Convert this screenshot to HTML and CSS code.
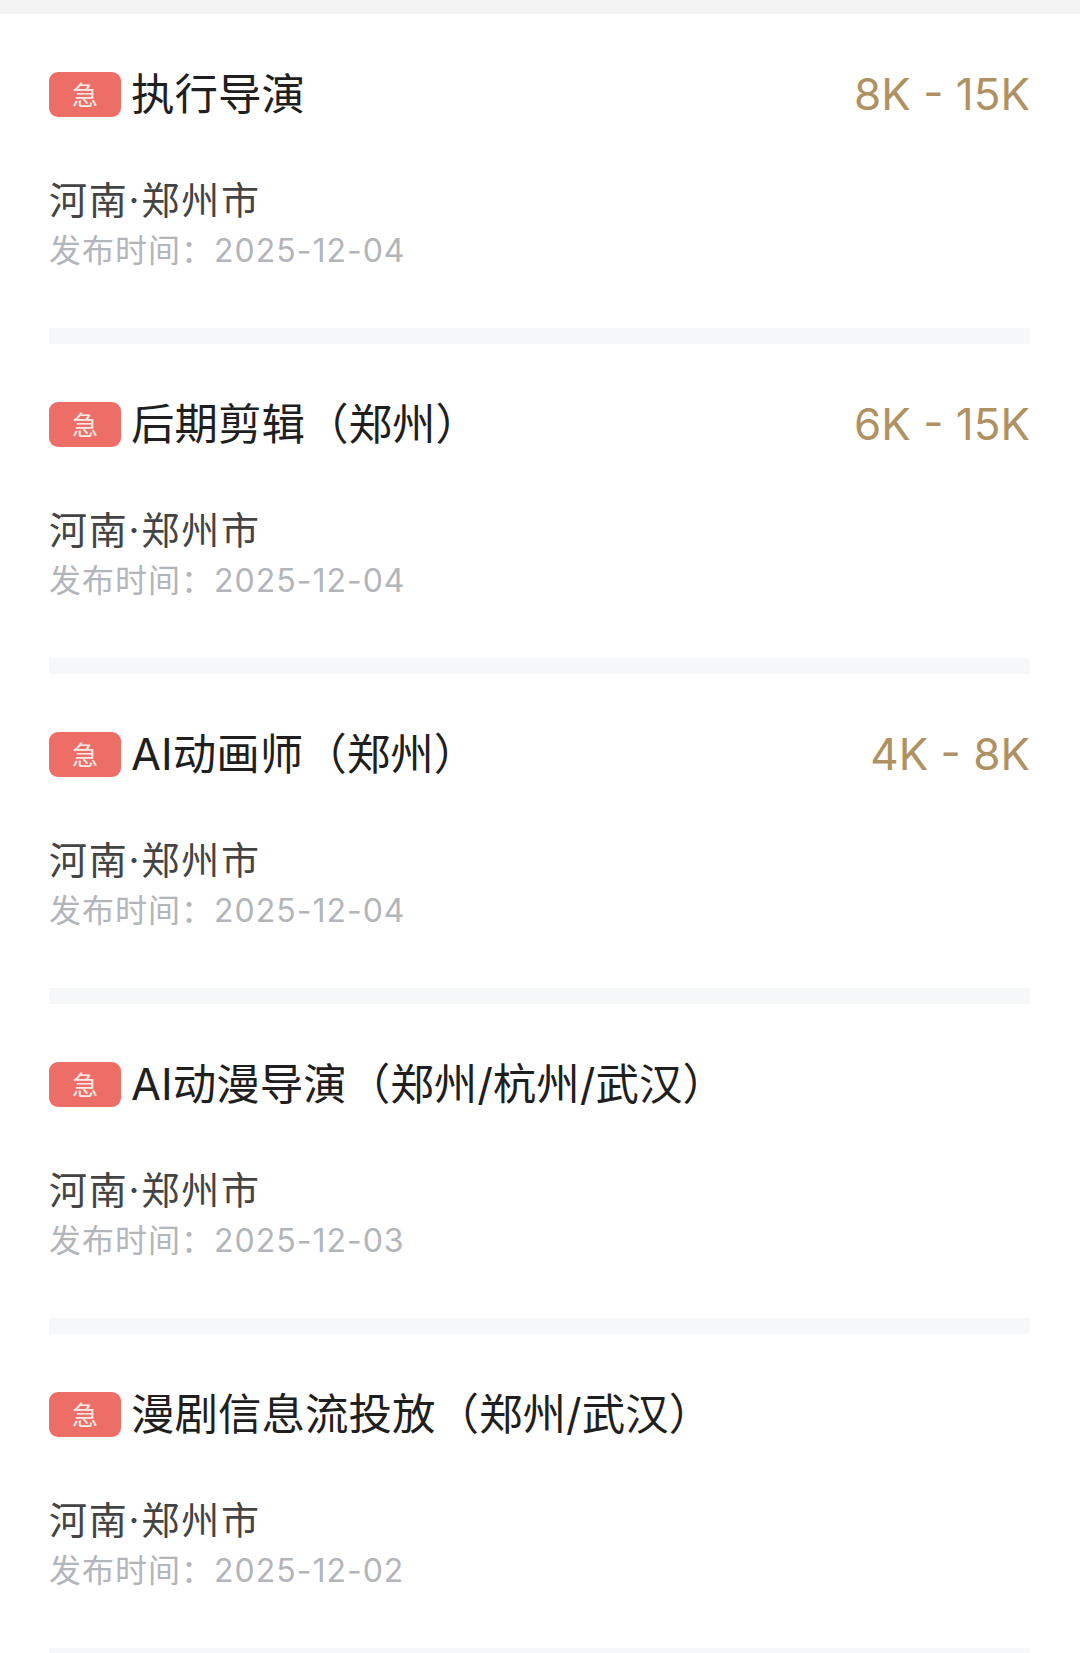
FILE: index.html
```html
<!DOCTYPE html>
<html lang="zh-CN">

<head>
    <meta charset="UTF-8">
    <meta name="viewport" content="width=device-width, initial-scale=1.0">
    <link rel="stylesheet" href="styles.css">
    <title>职位列表</title>
</head>

<body>
    <div class="job-list">

        <div class="job-item">
            <div class="job-head">
                <div class="job-title"><span class="urgent">急</span>执行导演</div>
                <div class="salary">8K - 15K</div>
            </div>
            <p class="location">河南·郑州市</p>
            <p class="date">发布时间：2025-12-04</p>
        </div>
        <div class="divider"></div>

        <div class="job-item">
            <div class="job-head">
                <div class="job-title"><span class="urgent">急</span>后期剪辑（郑州）</div>
                <div class="salary">6K - 15K</div>
            </div>
            <p class="location">河南·郑州市</p>
            <p class="date">发布时间：2025-12-04</p>
        </div>
        <div class="divider"></div>

        <div class="job-item">
            <div class="job-head">
                <div class="job-title"><span class="urgent">急</span>AI动画师（郑州）</div>
                <div class="salary">4K - 8K</div>
            </div>
            <p class="location">河南·郑州市</p>
            <p class="date">发布时间：2025-12-04</p>
        </div>
        <div class="divider"></div>

        <div class="job-item">
            <div class="job-head">
                <div class="job-title"><span class="urgent">急</span>AI动漫导演（郑州/杭州/武汉）</div>
            </div>
            <p class="location">河南·郑州市</p>
            <p class="date">发布时间：2025-12-03</p>
        </div>
        <div class="divider"></div>

        <div class="job-item">
            <div class="job-head">
                <div class="job-title"><span class="urgent">急</span>漫剧信息流投放（郑州/武汉）</div>
            </div>
            <p class="location">河南·郑州市</p>
            <p class="date">发布时间：2025-12-02</p>
        </div>
        <div class="divider"></div>

    </div>
</body>

</html>
```

FILE: styles.css
```css
/* General */
body {
    font-family: Inter, "Noto Sans CJK SC", sans-serif;
    background-color: #f4f4f5;
    color: #222;
    margin: 0;
    padding: 14px 0 0;
}

.job-list {
    background: #ffffff;
    padding: 0 50px 0 49px;
}

/* Job card */
.job-item {
    padding: 58px 0 53px;
}

.job-head {
    display: flex;
    align-items: center;
    justify-content: space-between;
    height: 44px;
}

.job-title {
    display: flex;
    align-items: center;
    font-size: 43.5px;
    line-height: 44px;
    color: #1f1f1f;
    white-space: nowrap;
}

.urgent {
    display: inline-flex;
    align-items: center;
    justify-content: center;
    width: 72px;
    height: 45px;
    margin-right: 10px;
    border-radius: 9px;
    background-color: #ec6e67;
    color: #fde9e6;
    font-family: "Noto Sans CJK SC", sans-serif;
    font-size: 26px;
    line-height: 1;
}

.salary {
    font-size: 44px;
    line-height: 44px;
    color: #b09161;
    white-space: nowrap;
}

.location {
    margin: 59px 0 0;
    font-size: 38px;
    line-height: 50px;
    color: #444;
    letter-spacing: 1.8px;
}

.date {
    margin: 2px 0 0;
    font-size: 32px;
    line-height: 48px;
    color: #b2b5ba;
    letter-spacing: 1px;
}

.divider {
    height: 16px;
    background-color: #f6f7f8;
}
```
